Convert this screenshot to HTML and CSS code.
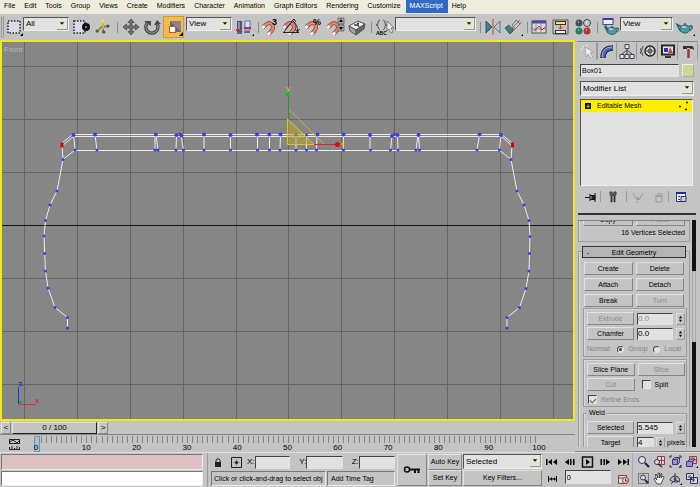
FILE: index.html
```html
<!DOCTYPE html>
<html lang="en">
<head>
<meta charset="utf-8">
<title>Box01 - Editable Mesh</title>
<link rel="stylesheet" href="styles.css">
</head>
<body>
<svg class="defs" aria-hidden="true">
  <symbol id="magnet" viewBox="0 0 18 20" overflow="visible">
    <path d="M2 10.500L5 7.500Q9 4.500 11.500 8Q13 11 10.500 14L7.500 17" fill="none" stroke="#7d4540" stroke-width="4"/>
    <path d="M2 10.500L5 7.500Q9 4.500 11.500 8Q13 11 10.500 14L7.500 17" fill="none" stroke="#e88472" stroke-width="2.500"/>
    <path d="M1.500 11L3.500 9M7 17.500L9 15.500" stroke="#f4f4f4" stroke-width="2.800"/>
  </symbol>
  <symbol id="teapot" viewBox="0 0 16 11" overflow="visible">
    <path d="M4 4 L0 2 L3 8 L5 9 M12 4 Q16 2 15 6 Q14 8 11 8" fill="none" stroke="#28616b" stroke-width="1.500"/>
    <ellipse cx="8" cy="6.500" rx="5" ry="4" fill="#4b98a1" stroke="#28616b"/>
    <ellipse cx="7" cy="4.500" rx="2.500" ry="1" fill="#a9dadd"/>
    <circle cx="8" cy="1.500" r="1" fill="#28616b"/>
  </symbol>
  <symbol id="arrow" viewBox="0 0 11 11"><path d="M3 4H8L5.500 7Z" fill="#111"/></symbol>
</svg>

<nav class="menu">
  <a href="#">File</a><a href="#">Edit</a><a href="#">Tools</a><a href="#">Group</a><a href="#">Views</a><a href="#">Create</a><a href="#">Modifiers</a><a href="#">Character</a><a href="#">Animation</a><a href="#">Graph Editors</a><a href="#">Rendering</a><a href="#">Customize</a><a href="#" class="current">MAXScript</a><a href="#">Help</a>
</nav>

<div class="toolbar">
  <i class="handle"></i>
  <button class="tool w18" aria-label="Select region"><svg viewBox="0 0 18 20"><rect x="3" y="4" width="12" height="12" fill="#dcdce8" stroke="#222" stroke-width="1.500" stroke-dasharray="1.500 1.500"/><path d="M15 19h3v-3z"/></svg></button>
  <span class="combo w46"><select aria-label="Selection filter"><option>All</option></select><svg><use href="#arrow"/></svg></span>
  <button class="tool w24" aria-label="Window crossing"><svg viewBox="0 0 18 20"><rect x="2" y="4" width="11" height="12" fill="#dcdce8" stroke="#222" stroke-width="1.500" stroke-dasharray="1.500 1.500"/><circle cx="14" cy="10" r="4" fill="#111"/><circle cx="14" cy="10" r="1" fill="#aaa"/></svg></button>
  <button class="tool w20" aria-label="Manipulate"><svg viewBox="0 0 18 20"><path d="M9 4V16M3 15L8 10L15 9" fill="none" stroke="#777" stroke-width="2"/><path d="M9 3v8l-4 3" fill="none" stroke="#e3c83c" stroke-width="1.500"/><circle cx="9" cy="4" r="2" fill="#f0d84a"/><circle cx="3" cy="14" r="1.500" fill="#555"/><circle cx="14" cy="9" r="1.500" fill="#444"/><circle cx="10" cy="15" r="1.500" fill="#555"/></svg></button>
  <i class="sep w8"></i>
  <button class="tool w20" aria-label="Move"><svg viewBox="0 0 18 20"><path d="M9 2l3 3.500h-2V9h3.500V7L17 10l-3.500 3v-2H10v3.500h2L9 18l-3-3.500h2V11H4.500v2L1 10l3.500-3v2H8V5.500H6z" fill="#777" stroke="#444" stroke-width=".8"/></svg></button>
  <button class="tool w22" aria-label="Rotate"><svg viewBox="0 0 18 20"><path d="M4.500 6A6 6 0 1 0 14 7" fill="none" stroke="#3f3f3f" stroke-width="3.500"/><path d="M4.500 6A6 6 0 1 0 14 7" fill="none" stroke="#8b8b8b" stroke-width="1.500"/><path d="M1 4h7v5zM11 8l3-5 4 4z" fill="#484848"/></svg></button>
  <button class="tool w21 active" aria-label="Scale"><svg viewBox="0 0 18 20"><rect x="5" y="4" width="11" height="11" fill="#656074"/><path d="M5 4h11v11z" fill="#898391"/><rect x="4.500" y="9.500" width="6" height="6" fill="#fff" stroke="#d8473c"/><path d="M14 19h4v-4z"/></svg></button>
  <span class="combo w46 after-scale"><select aria-label="Reference coordinates"><option>View</option></select><svg><use href="#arrow"/></svg></span>
  <button class="tool w24" aria-label="Pivot center"><svg viewBox="0 0 18 20"><path d="M2 4h5v11H2z" fill="#4e5277"/><path d="M3 5h2v7H3z" fill="#8d90ae"/><path d="M10 4h5v9h-5z" fill="#dde2f1" stroke="#5a77a7"/><path d="M1 13h6M9 11h7" stroke="#b23a4e" stroke-width="2"/><path d="M2 16h5M9 15h6" stroke="#60698e" stroke-width="2"/><path d="M17 19h2v-2z"/></svg></button>
  <i class="sep w4"></i>
  <button class="tool w20" aria-label="3D snap"><svg viewBox="0 0 18 20"><use href="#magnet" width="18" height="20"/><text x="11" y="8" class="glyph">3</text></svg></button>
  <button class="tool w22" aria-label="Angle snap"><svg viewBox="0 0 18 20"><use href="#magnet" width="18" height="20"/><path d="M1 15.500H17M2 15L11 3M11 4Q16 8 15.500 15M9 5l3-3 2 3M13 12l2.500 3 2-3" fill="none" stroke="#222"/></svg></button>
  <button class="tool w22" aria-label="Percent snap"><svg viewBox="0 0 18 20"><use href="#magnet" width="18" height="20"/><text x="9" y="8" class="glyph">%</text></svg></button>
  <button class="tool w22" aria-label="Spinner snap"><svg viewBox="0 0 18 20"><use href="#magnet" width="18" height="20"/><path d="M12 1h6v6h-6zM12 8h6v6h-6z" fill="#aaa" stroke="#555" stroke-width=".7"/><path d="M13 5l2-3 2 3zM13 10l2 3 2-3z"/></svg></button>
  <button class="tool w22" aria-label="Keyboard override"><svg viewBox="0 0 18 20"><path d="M1 9L10 4L17 7L8 13Z" fill="#eee" stroke="#555"/><path d="M1 9L8 13V18L2 14Z" fill="#aaa" stroke="#555"/><path d="M8 13L17 7L16 12L8 18Z" fill="#666" stroke="#555"/><path d="M6 8h4l1 2M9 7l2-1" fill="none" stroke="#444" stroke-width="1.500"/></svg></button>
  <i class="sep w6"></i>
  <button class="tool w20" aria-label="Edit named selections"><svg viewBox="0 0 18 20"><path d="M5 3Q3 3 3 6T1 8Q3 8 3 10T5 13M8 3Q10 3 10 6T12 8Q10 8 10 10T8 13" fill="none" stroke="#555"/><text x="1" y="18" class="abc">ABC</text><path d="M12 4v10l2-2 2 4 2-1-2-4h3z" fill="#eee" stroke="#555" stroke-width=".7"/></svg></button>
  <span class="combo wide"><select aria-label="Named selection sets"><option></option></select><svg><use href="#arrow"/></svg></span>
  <i class="sep w8"></i>
  <button class="tool w18" aria-label="Mirror"><svg viewBox="0 0 18 20"><path d="M2 4L8 10L2 16Z" fill="#3d8288" stroke="#355a60"/><path d="M16 4L10 10L16 16Z" fill="#b7c7c8" stroke="#637678"/><path d="M9 2V18" stroke="#c54b43"/></svg></button>
  <button class="tool w22" aria-label="Align"><svg viewBox="0 0 18 20"><path d="M1 11l4-3 5 5-4 4z" fill="#397e80" stroke="#37565b"/><path d="M8 8l4-5 4 4-5 5z" fill="#b8cdd0" stroke="#657a7e"/><path d="M5 8l3 3 8-8M9 14l9-9" fill="none" stroke="#ba655a"/><path d="M17 19h2v-2z"/></svg></button>
  <i class="sep w6"></i>
  <button class="tool w18" aria-label="Layer manager"><svg viewBox="0 0 18 20"><rect x="2" y="4" width="14" height="12" fill="#ddd" stroke="#555"/><path d="M2 5h14" stroke="#4d4aa8" stroke-width="3"/><path d="M6 6v10M11 6v10M2 12h14" stroke="#777" stroke-width=".8"/><path d="M4 14l5-5 3 4 3-3" stroke="#a35" fill="none"/></svg></button>
  <button class="tool w24" aria-label="Schematic view"><svg viewBox="0 0 18 20"><path d="M2 3h15v14H2z" fill="#c4c4c4" stroke="#555"/><rect x="4.500" y="4.500" width="10" height="3" fill="#ffe649" stroke="#333"/><rect x="4.500" y="13.500" width="10" height="3" fill="#eee" stroke="#333"/><path d="M9.500 8v4M7.500 10l2 2 2-2" stroke="#d33" fill="none"/></svg></button>
  <button class="tool w22" aria-label="Material editor"><svg viewBox="0 0 18 20"><circle cx="5" cy="6" r="3.500" fill="#3e5068"/><circle cx="13" cy="6" r="3.500" fill="#c8c8cb" stroke="#444"/><circle cx="5" cy="14" r="3.500" fill="#287b65"/><circle cx="13" cy="14" r="3.500" fill="#b63139"/><path d="M4 5h1M12 5h1M4 13h1M12 13h1" stroke="#fff"/></svg></button>
  <i class="sep w6"></i>
  <button class="tool w20" aria-label="Render scene"><svg viewBox="0 0 18 20"><rect x="2" y="1.500" width="10" height="6" fill="#eee" stroke="#4d4b91"/><path d="M2 2h10" stroke="#3937a4" stroke-width="2"/><path d="M5 8v4h2" stroke="#333" fill="none"/><use href="#teapot" x="4" y="8" width="14" height="10"/></svg></button>
  <span class="combo w53"><select aria-label="Render type"><option>View</option></select><svg><use href="#arrow"/></svg></span>
  <button class="tool w24" aria-label="Quick render"><svg viewBox="0 0 18 20"><use href="#teapot" x="1" y="5" width="16" height="12"/><path d="M17 19h2v-2z"/></svg></button>
</div>

<main class="main">
  <section class="stage">
    <div class="viewport">
      <svg viewBox="2 42 571 377" preserveAspectRatio="xMinYMin slice">
        <path class="grid" d="M24.500 40V422M77.500 40V422M130.500 40V422M183.500 40V422M236.500 40V422M288.500 40V422M341.500 40V422M394.500 40V422M447.500 40V422M500.500 40V422M553.500 40V422M0 66.500H576M0 119.500H576M0 172.500H576M0 278.500H576M0 331.500H576M0 384.500H576"/>
        <path d="M0 225.500H576" stroke="#161616"/>
        <path class="mesh" d="M73 134.500H501M73 136.500H501M75 150.500H500"/>
        <path class="mesh" d="M73 134L62 143M74 136L62 146V145L63 159.500L75 150M63 159.500L57 191L50 205L45.500 220.500L44 236L44.700 253.500L45.500 271L48 288L55 307.500L67.500 317.500V328"/>
        <path class="mesh" d="M501 134L512 143M501 136L512 146V145L511 159.500L499 150M511 159.500L517 191L524 205L529 220.500L530 236.500L529.500 253.500L529 271L526 288.500L519.500 307.500L507 317.500V328"/>
        <path class="mesh" d="M73.500 135L75 150M95 135L97 150M155 135V150M156 135L158 150M176.500 135L176 150M181 135L183.500 150M204 135V150M230.500 135V150M257.500 135V150M269.500 135V150M280.500 135L280 150M296 135V150M306.500 135V150M317 135L316.500 150M343.500 135V150M370 135V150M392 136L390.500 150M397.500 135L398 150M418 135L416 150M418.500 135L419.500 150M479.500 135L477 150M501 135L499.500 150"/>
        <path class="vertex thick" d="M73.500 135h0M95 134.500h0M155.800 134.500h0M204 134.500h0M230.500 135h0M257 134.500h0M269.300 134.500h0M280.500 134.500h0M317.500 134.500h0M343.500 134.500h0M370 135h0M418.500 135h0M479.500 134.500h0M501 135h0M176.500 135h0M181.500 135.500h0M392 136h0M397.500 135h0"/>
        <path class="vertex" d="M180 134h0M394.500 134h0M296 135h0M306.500 135h0M75 150h0M97 150h0M155 150h0M158 150h0M176 150h0M183.500 150h0M204 150h0M230.500 150h0M257.500 150h0M269.500 150h0M280 150h0M296 150h0M306.500 150h0M316.500 150h0M343.500 150h0M370.500 150h0M390.500 150h0M398 150h0M416 150h0M419.500 150h0M477 150h0M499.500 150h0M63 159.500h0M57 191h0M50 205h0M45.500 220.500h0M44 236h0M44.700 253.500h0M45.500 271h0M48 288h0M55 307.500h0M67.500 317.500h0M67.500 328h0M511 159.500h0M517 191h0M524 205h0M529 220.500h0M530 236.500h0M529.500 253.500h0M529 271h0M526 288.500h0M519.500 307.500h0M507 317.500h0M507 328h0"/>
        <path d="M62 142.500v5M512.500 142.500v5" stroke="#e00000" stroke-width="3"/>
        <path d="M287.500 119V144.500H314Z" fill="#b9a520" fill-opacity=".55" stroke="#e2c61e"/>
        <path d="M287.500 108L325 145" stroke="#cbb13a" fill="none"/>
        <path d="M288.500 94V119" stroke="#2f8f2f"/><circle cx="287.500" cy="94.500" r="2" fill="#00d000"/>
        <path d="M314 144.500H338" stroke="#d22"/><circle cx="337.500" cy="144.500" r="2.500" fill="#f00000"/>
        <path d="M286.500 87l2 3M290 87l-2 5M341 145l2-3M343 139v9" stroke="#d9bd20"/>
        <path d="M18.500 387V404" stroke="#2929f0"/><path d="M19 404.500H36" stroke="#e02a3a"/><path d="M19 402h3" stroke="#18b018" stroke-width="2"/>
        <path d="M18.500 382.500h3l-2 3h3" stroke="#3434d5" fill="none"/><path d="M35.500 399l3 4M38.500 399l-3 4" stroke="#d8283b"/>
        <text x="4" y="52" class="view-name">Front</text>
      </svg>
    </div>
    <div class="slider"><button aria-label="Previous frame">&lt;</button><button class="thumb">0 / 100</button><button aria-label="Next frame">&gt;</button></div>
    <div class="track">
      <svg class="curve-toggle" viewBox="0 0 13 13"><path d="M1 1.500h11M1 5.500h11M1.500 1v5M11.500 1v5M2 4l3-2 4 3 3-3M1 11.500h11M1.500 9v3M6.500 10v2M11.500 9v3M4 8v3M9 8v3" fill="none" stroke="#222"/></svg>
      <div class="scale">
        <i class="marker"></i>
        <div class="ticks"></div>
        <div class="frames"><span>0</span><span>10</span><span>20</span><span>30</span><span>40</span><span>50</span><span>60</span><span>70</span><span>80</span><span>90</span><span>100</span></div>
      </div>
    </div>
  </section>

  <aside class="panel">
    <div class="tabs">
      <button aria-label="Create"><svg viewBox="0 0 16 16"><path d="M3 2l2 3M1 6h3M8 1L7 4" stroke="#f0e6aa"/><path d="M6 4l8 5-3 1 3 4-2 1-3-4-2 3z" fill="#eee" stroke="#888" stroke-width=".6"/></svg></button>
      <button class="on" aria-label="Modify"><svg viewBox="0 0 16 16"><path d="M4 15Q4 5 14 5" fill="none" stroke="#222a5c" stroke-width="5.500"/><path d="M4 15Q4 5 14 5" fill="none" stroke="#5264aa" stroke-width="3"/><path d="M3 14Q3 4 13 4" fill="none" stroke="#a2b4dc"/></svg></button>
      <button aria-label="Hierarchy"><svg viewBox="0 0 16 16"><path d="M6 1.500h4v4H6zM1 11.500h4v4H1zM6 11.500h4v4H6zM11 11.500h4v4h-4z" fill="#e6e6ef" stroke="#445"/><path d="M8 6v5M8 7L3 11M8 7l5 4" stroke="#445"/></svg></button>
      <button aria-label="Motion"><svg viewBox="0 0 16 16"><circle cx="10" cy="8" r="5" fill="#ddd" stroke="#222" stroke-width="1.500"/><circle cx="10" cy="8" r="2" fill="none" stroke="#333"/><path d="M10 3v10M5 8h10M3 3Q0 8 3 13M1 5Q-1 8 1 11" fill="none" stroke="#555"/></svg></button>
      <button aria-label="Display"><svg viewBox="0 0 16 16"><rect x="1.500" y="2" width="13" height="10" fill="#333" stroke="#222"/><rect x="3" y="3.500" width="10" height="7" fill="#e8e8fa"/><path d="M4 5h4v4H4z" fill="#3436a8"/><path d="M8 10l2-6 3 6z" fill="#cc3d45"/><path d="M5 14h6" stroke="#333" stroke-width="2"/></svg></button>
      <button aria-label="Utilities"><svg viewBox="0 0 16 16"><path d="M3 3h8q3 0 3 4-2-2-4-1v-1H7v1H3z" fill="#333"/><path d="M8.500 6v9" stroke="#963b32" stroke-width="2.500"/></svg></button>
    </div>
    <div class="name-row"><input aria-label="Object name" value="Box01"><button class="swatch" aria-label="Object color"></button></div>
    <span class="combo modifiers"><select aria-label="Modifier list"><option>Modifier List</option></select><svg><use href="#arrow"/></svg></span>
    <div class="stack">
      <div class="stack-row"><button aria-label="Expand">+</button><span>Editable Mesh</span><svg viewBox="0 0 12 10"><path d="M2 5.500h2M8 8.500h2M9 1.500h2" stroke="#222" stroke-width="1.500"/></svg></div>
    </div>
    <div class="stack-tools">
      <button aria-label="Pin stack"><svg viewBox="0 0 12 12"><path d="M0 6.500h5M5 3v7M5 4.500h5M5 8.500h5M10 2v9M7 5h3v3H7z" stroke="#111" fill="#333"/></svg></button>
      <button class="ruled" aria-label="Show end result"><svg viewBox="0 0 12 12"><path d="M3 1h2v2h2V1h2v3H8v7H7V4H5v7H4V4H3z" fill="#777" stroke="#222" stroke-width=".8"/></svg></button>
      <button class="ruled" disabled aria-label="Make unique"><svg viewBox="0 0 12 12"><path d="M1 2l4 7 1-3 1 3 4-7M4 11h2" fill="none" stroke="#999"/></svg></button>
      <button disabled aria-label="Remove modifier"><svg viewBox="0 0 12 12"><path d="M3 5h6v6H3zM2 5h8M4 4l3-2 2 2" fill="none" stroke="#999"/></svg></button>
      <button class="ruled" aria-label="Configure sets"><svg viewBox="0 0 12 12"><path d="M1.500 1.500h9v9h-9zM3 5.500h2M3 8.500h2" fill="#eee" stroke="#333b91"/><path d="M1 2h10" stroke="#2828a3" stroke-width="2"/><path d="M6 5.500h5v5H6z" fill="#ccd" stroke="#335"/></svg></button>
    </div>
    <div class="rollouts">
      <div class="scrolled">
        <div class="frame selection">
          <div class="pair"><button>Copy</button><button disabled>Paste</button></div>
          <p>16 Vertices Selected</p>
        </div>
        <div class="frame geometry">
          <button class="title"><span>-</span>Edit Geometry</button>
          <div class="buttons">
            <button>Create</button><button>Delete</button>
            <button>Attach</button><button>Detach</button>
            <button>Break</button><button disabled>Turn</button>
          </div>
          <div class="frame group">
            <div class="pair"><button disabled>Extrude</button><span class="spin"><input aria-label="Extrude" value="0.0" disabled><svg viewBox="0 0 9 12"><path d="M2.500 5l2-3 2 3zM2.500 7l2 3 2-3z"/></svg></span></div>
            <div class="pair"><button>Chamfer</button><span class="spin"><input aria-label="Chamfer" value="0.0"><svg viewBox="0 0 9 12"><path d="M2.500 5l2-3 2 3zM2.500 7l2 3 2-3z"/></svg></span></div>
            <div class="radios">Normal:<label><input type="radio" name="normal" checked disabled>Group</label><label><input type="radio" name="normal" disabled>Local</label></div>
          </div>
          <div class="frame group">
            <div class="pair"><button>Slice Plane</button><button disabled>Slice</button></div>
            <div class="pair"><button disabled>Cut</button><label class="split"><input type="checkbox">Split</label></div>
            <label class="refine"><input type="checkbox" checked disabled>Refine Ends</label>
          </div>
          <fieldset class="frame group">
            <legend>Weld</legend>
            <div class="pair"><button>Selected</button><span class="spin"><input aria-label="Weld selected" value="5.545"><svg viewBox="0 0 9 12"><path d="M2.500 5l2-3 2 3zM2.500 7l2 3 2-3z"/></svg></span></div>
            <div class="pair"><button>Target</button><span class="spin short"><input aria-label="Weld target" value="4"><svg viewBox="0 0 9 12"><path d="M2.500 5l2-3 2 3zM2.500 7l2 3 2-3z"/></svg>pixels</span></div>
          </fieldset>
        </div>
      </div>
      <div class="scrollbar"><i></i></div>
    </div>
  </aside>
</main>

<footer class="status">
  <div class="listener"><input class="pink" aria-label="Macro recorder"><input aria-label="Script listener"></div>
  <div class="readout">
    <div class="coords">
      <svg class="lock" viewBox="0 0 8 11"><path d="M2 5V3q2-3 4 0v2" fill="none" stroke="#222"/><path d="M1 5h6v5H1z" fill="#222"/></svg>
      <svg class="absolute-mode" viewBox="0 0 11 11"><path d="M.5.500h10v10H.500z" fill="none" stroke="#222"/><path d="M5.500 2.500v6M2.500 5.500h6" stroke="#777"/><circle cx="5.500" cy="5.500" r="1.500" fill="#222"/></svg>
      <label>X:<input></label><label>Y:<input></label><label>Z:<input></label>
    </div>
    <div class="prompts"><span class="prompt">Click or click-and-drag to select obj</span><span class="tag">Add Time Tag</span></div>
  </div>
  <button class="key" aria-label="Set keys"><svg viewBox="0 0 18 10"><circle cx="4" cy="4.500" r="2.500" fill="none" stroke="#111" stroke-width="1.500"/><path d="M6 4.500h11M12 5v3M15.500 5v3" stroke="#111" stroke-width="2"/></svg></button>
  <div class="keys">
    <button>Auto Key</button>
    <span class="combo"><select aria-label="Key set"><option>Selected</option></select><svg><use href="#arrow"/></svg></span>
    <button>Set Key</button><button>Key Filters...</button>
  </div>
  <div class="playback">
    <div class="transport">
      <button aria-label="Go to start"><svg viewBox="0 0 13 12"><path d="M1 3h1.500v6H1zM3 6l4-3v6zM8 6l4-3v6z"/></svg></button>
      <button aria-label="Previous"><svg viewBox="0 0 13 12"><path d="M2 6l4-3v6zM7 3h1.500v6H7zM10 3h1.500v6H10z"/></svg></button>
      <button aria-label="Play"><svg viewBox="0 0 13 12"><path d="M1.500 1h10v10h-10z" fill="none" stroke="#111" stroke-width="1.500"/><path d="M5 3l4 3-4 3z"/></svg></button>
      <button aria-label="Next"><svg viewBox="0 0 13 12"><path d="M1.500 3H3v6H1.500zM4.500 3H6v6H4.500zM7 3l4 3-4 3z"/></svg></button>
      <button aria-label="Go to end"><svg viewBox="0 0 13 12"><path d="M1 3l4 3-4 3zM6 3l4 3-4 3zM10.500 3H12v6h-1.500z"/></svg></button>
    </div>
    <div class="frame-row">
      <button aria-label="Key mode"><svg viewBox="0 0 13 12"><path d="M3 3h1v6H3zM5 6l2-2v4zM8 6l2-2v4zM11 3h1v6h-1zM4 5.500h8v1H4z"/></svg></button>
      <input aria-label="Current frame" value="0">
      <button aria-label="Time configuration"><svg viewBox="0 0 13 12"><path d="M1.500 2.500h8v8h-8zM2 5h7" fill="#ddd" stroke="#844"/><circle cx="8.500" cy="7.500" r="3" fill="#e8d0d0" stroke="#933"/><path d="M8.500 6v2h2" stroke="#333" fill="none"/></svg></button>
    </div>
  </div>
  <div class="navigate">
    <button aria-label="Zoom"><svg viewBox="0 0 13 13"><circle cx="5" cy="5" r="3.500" fill="#dde" stroke="#335"/><path d="M8 8l4 4" stroke="#224" stroke-width="2"/></svg></button>
    <button aria-label="Zoom all"><svg viewBox="0 0 13 13"><path d="M4.500 1.500h7v8h-7zM4 5.500h8M8.500 1v9" fill="#ddd" stroke="#a33"/><circle cx="4" cy="7" r="2.500" fill="#dde" stroke="#335"/><path d="M5 9l4 3" stroke="#224" stroke-width="1.500"/></svg></button>
    <button aria-label="Zoom extents"><svg viewBox="0 0 13 13"><path d="M3.500 4.500h5v5h-5zM3.500 4.500l2-2h5l-2 2M8.500 9.500l2-2v-5" fill="#99b" stroke="#3a3a90"/><path d="M1 3V1h2M10 1h2v2M1 10v2h2M12 10v3h-2z" stroke="#333" fill="none"/></svg></button>
    <button aria-label="Zoom extents all"><svg viewBox="0 0 13 13"><path d="M4.500 1.500h7v7h-7zM4 5h8M8 1v8" fill="#dbb" stroke="#a33"/><path d="M1.500 6.500h6v5h-6zM3 6l2-2h5l-2 2" fill="#99b" stroke="#3a3a90"/><path d="M11 13h2v-2z"/></svg></button>
    <button aria-label="Region zoom"><svg viewBox="0 0 13 13"><path d="M1.500 1.500h10v10h-10z" fill="none" stroke="#333" stroke-dasharray="1 1"/><circle cx="6" cy="5.500" r="2.500" fill="#dde" stroke="#335"/><path d="M8 8l3 3" stroke="#224" stroke-width="2"/></svg></button>
    <button aria-label="Pan"><svg viewBox="0 0 13 13"><path d="M4 12L1 7l1-1 2 2L2 3l1-1 2 4V1h1.500v5L8 1.500l1 .5-1 4 2-2 1 1-3 7z" fill="#eee" stroke="#333" stroke-width=".8"/></svg></button>
    <button aria-label="Arc rotate"><svg viewBox="0 0 13 13"><path d="M6 1v7M6 8l5 2M6 8l-4 4M2 6q4-4 8 0 2 4-3 4-4 0-6-2z" fill="none" stroke="#335"/><circle cx="6" cy="7" r="1.500" fill="#447"/><path d="M11 13h2v-2z"/></svg></button>
    <button aria-label="Maximize viewport"><svg viewBox="0 0 13 13"><path d="M1.500 1.500h7v6h-7zM5.500 5.500h7v6h-7z" fill="#d4d4e4" stroke="#335"/><path d="M4 4l5 5M4 6V4h2M7 9h2V7" fill="none" stroke="#447"/></svg></button>
  </div>
</footer>
</body>
</html>
```
FILE: styles.css
```css
* { box-sizing: border-box; }

:root {
  --face: #c4c4c4;
  --light: #e2e2e2;
  --shade: #858585;
  --field: #e1e1e1;
}

body {
  margin: 0;
  height: 100vh;
  display: flex;
  flex-direction: column;
  overflow: hidden;
  background: var(--face);
  color: #000;
  font: 7px/10px "Liberation Sans", Arial, sans-serif;
}

button, input, select {
  font: inherit;
  color: inherit;
  margin: 0;
  padding: 0;
  border-radius: 0;
  min-width: 0;
}

button {
  background: var(--face);
  border: 1px solid;
  border-color: var(--light) var(--shade) var(--shade) var(--light);
  white-space: nowrap;
}

button:disabled, input:disabled { color: #8b8b8b; }

input {
  background: var(--field);
  border: 1px solid;
  border-color: #444 var(--light) var(--light) #444;
}

svg { display: block; }
.defs { position: absolute; width: 0; height: 0; }

.menu {
  display: flex;
  flex: none;
  height: 13px;
  background: #eeecdc;
}
.menu a {
  padding: 1px 5px 0 4px;
  color: #000;
  text-decoration: none;
  white-space: nowrap;
}
.menu a.current { background: #316ac5; color: #fff; }

.toolbar {
  display: flex;
  flex: none;
  height: 27px;
  border-top: 1px solid #e8e8e8;
}
.tool {
  display: grid;
  place-items: center;
  flex: none;
  border: 0;
  background: none;
  height: 26px;
}
.tool svg { width: 18px; height: 20px; overflow: visible; }
.active { background: #f2bd45; height: 22px; margin-top: 2px; border: 1px solid #cf9b32; }
.w4 { width: 4px; }
.w6 { width: 6px; }
.w8 { width: 8px; }
.w18 { width: 18px; }
.w20 { width: 20px; }
.w21 { width: 21px; }
.w22 { width: 22px; }
.w24 { width: 24px; }
.w46 { width: 46px; }
.w53 { width: 53px; }
.wide { width: 81px; margin-left: 1px; }
.after-scale { margin-left: 2px; }
.handle {
  flex: none;
  width: 3px;
  margin: 2px 1px;
  border: 1px solid;
  border-color: transparent #999;
}
.sep { flex: none; display: flex; justify-content: center; align-items: center; }
.sep::before { content: ""; width: 1px; height: 11px; background: #8b8b8b; }
.glyph { font: bold 9px "Liberation Sans", sans-serif; }
.abc { font: bold 5px "Liberation Sans", sans-serif; }

.combo { position: relative; display: block; flex: none; height: 14px; font-size: 8px; }
.toolbar .combo { margin-top: 3px; }
.combo select {
  appearance: none;
  display: block;
  width: 100%;
  height: 100%;
  padding-left: 2px;
  background: var(--field);
  border: 1px solid;
  border-color: #555 #eee #eee #555;
}
.combo svg {
  position: absolute;
  top: 1px;
  right: 1px;
  width: 11px;
  height: 12px;
  background: #e6e4d2;
  border-right: 1px solid #999;
  border-bottom: 1px solid #999;
  pointer-events: none;
}

.main { display: flex; flex: 1; min-height: 0; }
.stage { display: flex; flex-direction: column; flex: 1; min-width: 0; }
.viewport {
  flex: 1;
  min-height: 0;
  border: 2px solid #f2ea10;
  background: #868686;
}
.viewport svg { width: 100%; height: 100%; }
.grid { stroke: #666; fill: none; }
.mesh { stroke: #ececec; fill: none; }
.vertex { stroke: #3c3ce8; stroke-width: 3; stroke-linecap: round; fill: none; }
.thick { stroke-width: 4; }
.view-name { fill: #b9b9b9; font-size: 8px; }

.slider { display: flex; flex: none; gap: 1px; height: 13px; padding: 1px 0 0 1px; font-size: 8px; }
.slider button { width: 10px; line-height: 8px; }
.slider .thumb { width: 85px; border-right-color: #222; border-bottom-color: #222; }

.track {
  display: flex;
  flex: none;
  height: 18px;
  border-top: 1px solid var(--shade);
}
.curve-toggle { flex: none; width: 13px; height: 13px; margin: 3px 14px 0 8px; }
.scale { position: relative; flex: 1; margin: 1px 36px 0 1px; }
.ticks {
  height: 7px;
  margin-right: -1px;
  background: repeating-linear-gradient(to right, #858585 0 1px, transparent 1px 1%);
}
.marker {
  position: absolute;
  left: -2px;
  top: 0;
  width: 6px;
  height: 16px;
  background: #a6bed0;
  border: 1px solid #6f93b1;
}
.frames { position: relative; display: flex; justify-content: space-between; font-size: 8px; line-height: 9px; }
.frames span { display: flex; width: 0; justify-content: center; }

.panel {
  display: flex;
  flex-direction: column;
  flex: none;
  width: 125px;
  padding: 1px 4px 4px 5px;
  border-bottom: 1px solid var(--shade);
}
.tabs { display: grid; grid-template-columns: repeat(6, 1fr); flex: none; height: 19px; margin: 0 -2px 4px -3px; border-top: 1px solid var(--shade); }
.tabs button { display: grid; place-items: center; border-color: transparent #999 transparent transparent; }
.tabs button.on { border-left-color: #999; }
.tabs svg { width: 16px; height: 16px; }
.name-row { display: flex; flex: none; gap: 3px; height: 13px; margin-bottom: 4px; padding-right: 2px; }
.name-row input { flex: 1; padding-left: 1px; }
.swatch { width: 12px; background: #cfd68f; border-color: #eee #aaa #aaa #eee; }
.modifiers { height: 15px; margin: 0 2px 3px 0; }
.stack {
  flex: none;
  height: 87px;
  margin-right: 3px;
  background: var(--field);
  border: 1px solid;
  border-color: #555 #eee #eee #555;
}
.stack-row { display: flex; align-items: center; gap: 6px; height: 12px; padding-left: 4px; background: #ffee00; }
.stack-row button { width: 6px; height: 6px; background: #111; border: 0; color: #fff; line-height: 5px; }
.stack-row svg { width: 12px; height: 10px; margin-left: auto; margin-right: 3px; }
.stack-tools { display: flex; flex: none; justify-content: space-between; height: 17px; margin: 2px 4px 8px 3px; }
.stack-tools button { display: grid; place-items: center; width: 16px; border: 0; }
.stack-tools .ruled { width: 24px; margin: 3px 0; border-left: 1px solid #999; }
.stack-tools svg { width: 12px; height: 12px; }

.rollouts { display: flex; flex: 1; min-height: 0; border-top: 2px solid #333; padding-top: 5px; margin-left: -2px; }
.scrolled { flex: 1; min-width: 0; overflow: hidden; border-top: 1px solid var(--shade); }
.scrollbar { width: 4px; margin-left: 2px; background: #111; }
.scrollbar i { display: block; height: 71px; margin-top: 51px; background: var(--face); border: 1px solid #aaa; }
.frame { border: 1px solid #9b9b9b; box-shadow: inset 1px 1px #d8d8d8; }
.selection { margin: -9px 0 9px; padding: 0 4px 3px; }
.selection p { margin: 2px 0 0; text-align: right; }
.geometry { padding: 0 3px; }
.title {
  display: block;
  width: 100%;
  height: 12px;
  margin: -6px 0 4px;
  padding: 0;
  line-height: 9px;
  border: 1px solid #333;
  background: #b4b4b4;
  position: relative;
}
.title span { position: absolute; left: 4px; }
.buttons, .pair { display: grid; grid-template-columns: 1fr 1fr; column-gap: 3px; }
.buttons { row-gap: 3px; margin: 0 2px 1px; }
.buttons button, .pair button { height: 13px; line-height: 10px; }
.group { margin: 0 -1px 2px 1px; padding: 3px 1px 0 3px; }
.geometry .group .pair { margin-bottom: 2px; }
.spin { display: flex; gap: 3px; align-items: center; }
.spin input { width: 36px; height: 12px; font-size: 8px; }
.spin svg { flex: none; width: 9px; height: 12px; border: 1px solid; border-color: #ddd #999 #999 #ddd; }
.spin.short input { width: 17px; }
.spin.short { gap: 2px; }
.radios { display: flex; justify-content: space-between; align-items: center; height: 14px; padding-right: 4px; color: #858585; }
label { display: flex; align-items: center; white-space: nowrap; }
[type="radio"], [type="checkbox"] {
  appearance: none;
  display: grid;
  place-items: center;
  flex: none;
  width: 9px;
  height: 9px;
}
[type="radio"] { width: 7px; height: 7px; border-radius: 50%; }
[type="radio"]:checked::after { content: ""; width: 3px; height: 3px; border-radius: 50%; background: #444; }
[type="checkbox"]:checked::after { content: ""; width: 5px; height: 3px; border: solid #666; border-width: 0 0 1px 1px; rotate: -45deg; }
.radios label { gap: 4px; }
.split, .refine { gap: 4px; }
.split { padding-left: 4px; }
.refine { height: 13px; padding-left: 1px; color: #858585; }
fieldset { min-width: 0; position: relative; }
fieldset.group { margin-top: 6px; padding-top: 7px; }
legend { position: absolute; top: -6px; left: 3px; padding: 0 2px; background: var(--face); line-height: 10px; }

.status {
  display: flex;
  flex: none;
  height: 35px;
  border-top: 1px solid #dedede;
}
.listener { display: flex; flex-direction: column; gap: 1px; flex: 0 1 203px; padding: 1px 0 1px 1px; }
.listener input { flex: 1; width: 100%; background: #fff; border-color: #777 #eee #eee #777; }
.listener .pink { background: #dcc1c3; }
.readout { flex: 1; min-width: 0; margin-left: 4px; padding-left: 3px; border-left: 1px solid #999; }
.coords { display: flex; align-items: center; height: 18px; gap: 9px; padding-left: 3px; font-size: 8px; }
.lock { flex: none; width: 8px; height: 11px; }
.absolute-mode { flex: none; width: 11px; height: 11px; }
.coords label { flex: 1; min-width: 0; }
.coords input { flex: 1; width: 0; height: 13px; }
.coords .absolute-mode + label { margin-left: -4px; }
.prompts { display: flex; gap: 1px; height: 15px; line-height: 13px; white-space: nowrap; }
.prompts span { overflow: hidden; padding-left: 2px; border: 1px solid; border-color: #777 #eee #eee #777; }
.prompt { flex: 1; }
.prompts .tag { flex: 0 0 68px; padding-left: 3px; }
.key { display: grid; place-items: center; flex: none; width: 30px; margin: 1px 1px 1px 2px; }
.key svg { width: 18px; height: 10px; }
.keys { display: grid; grid-template: 16px 16px / 34px 79px; gap: 0 1px; flex: none; padding-top: 1px; }
.keys .combo { height: 15px; }
.keys button { line-height: 12px; }
.playback { flex: none; width: 88px; margin-left: 3px; padding-right: 2px; border-right: 1px solid #aaa; }
.playback button, .navigate button { display: grid; place-items: center; border: 0; background: none; }
.transport, .frame-row { display: flex; justify-content: space-between; height: 17px; }
.transport svg, .frame-row svg { width: 13px; height: 12px; }
.frame-row input { width: 46px; height: 14px; padding-left: 1px; font-size: 8px; }
.navigate { display: grid; grid-template: 17px 16px / repeat(4, 16px); flex: none; width: 67px; padding-left: 2px; }
.navigate svg { width: 13px; height: 13px; }
```
